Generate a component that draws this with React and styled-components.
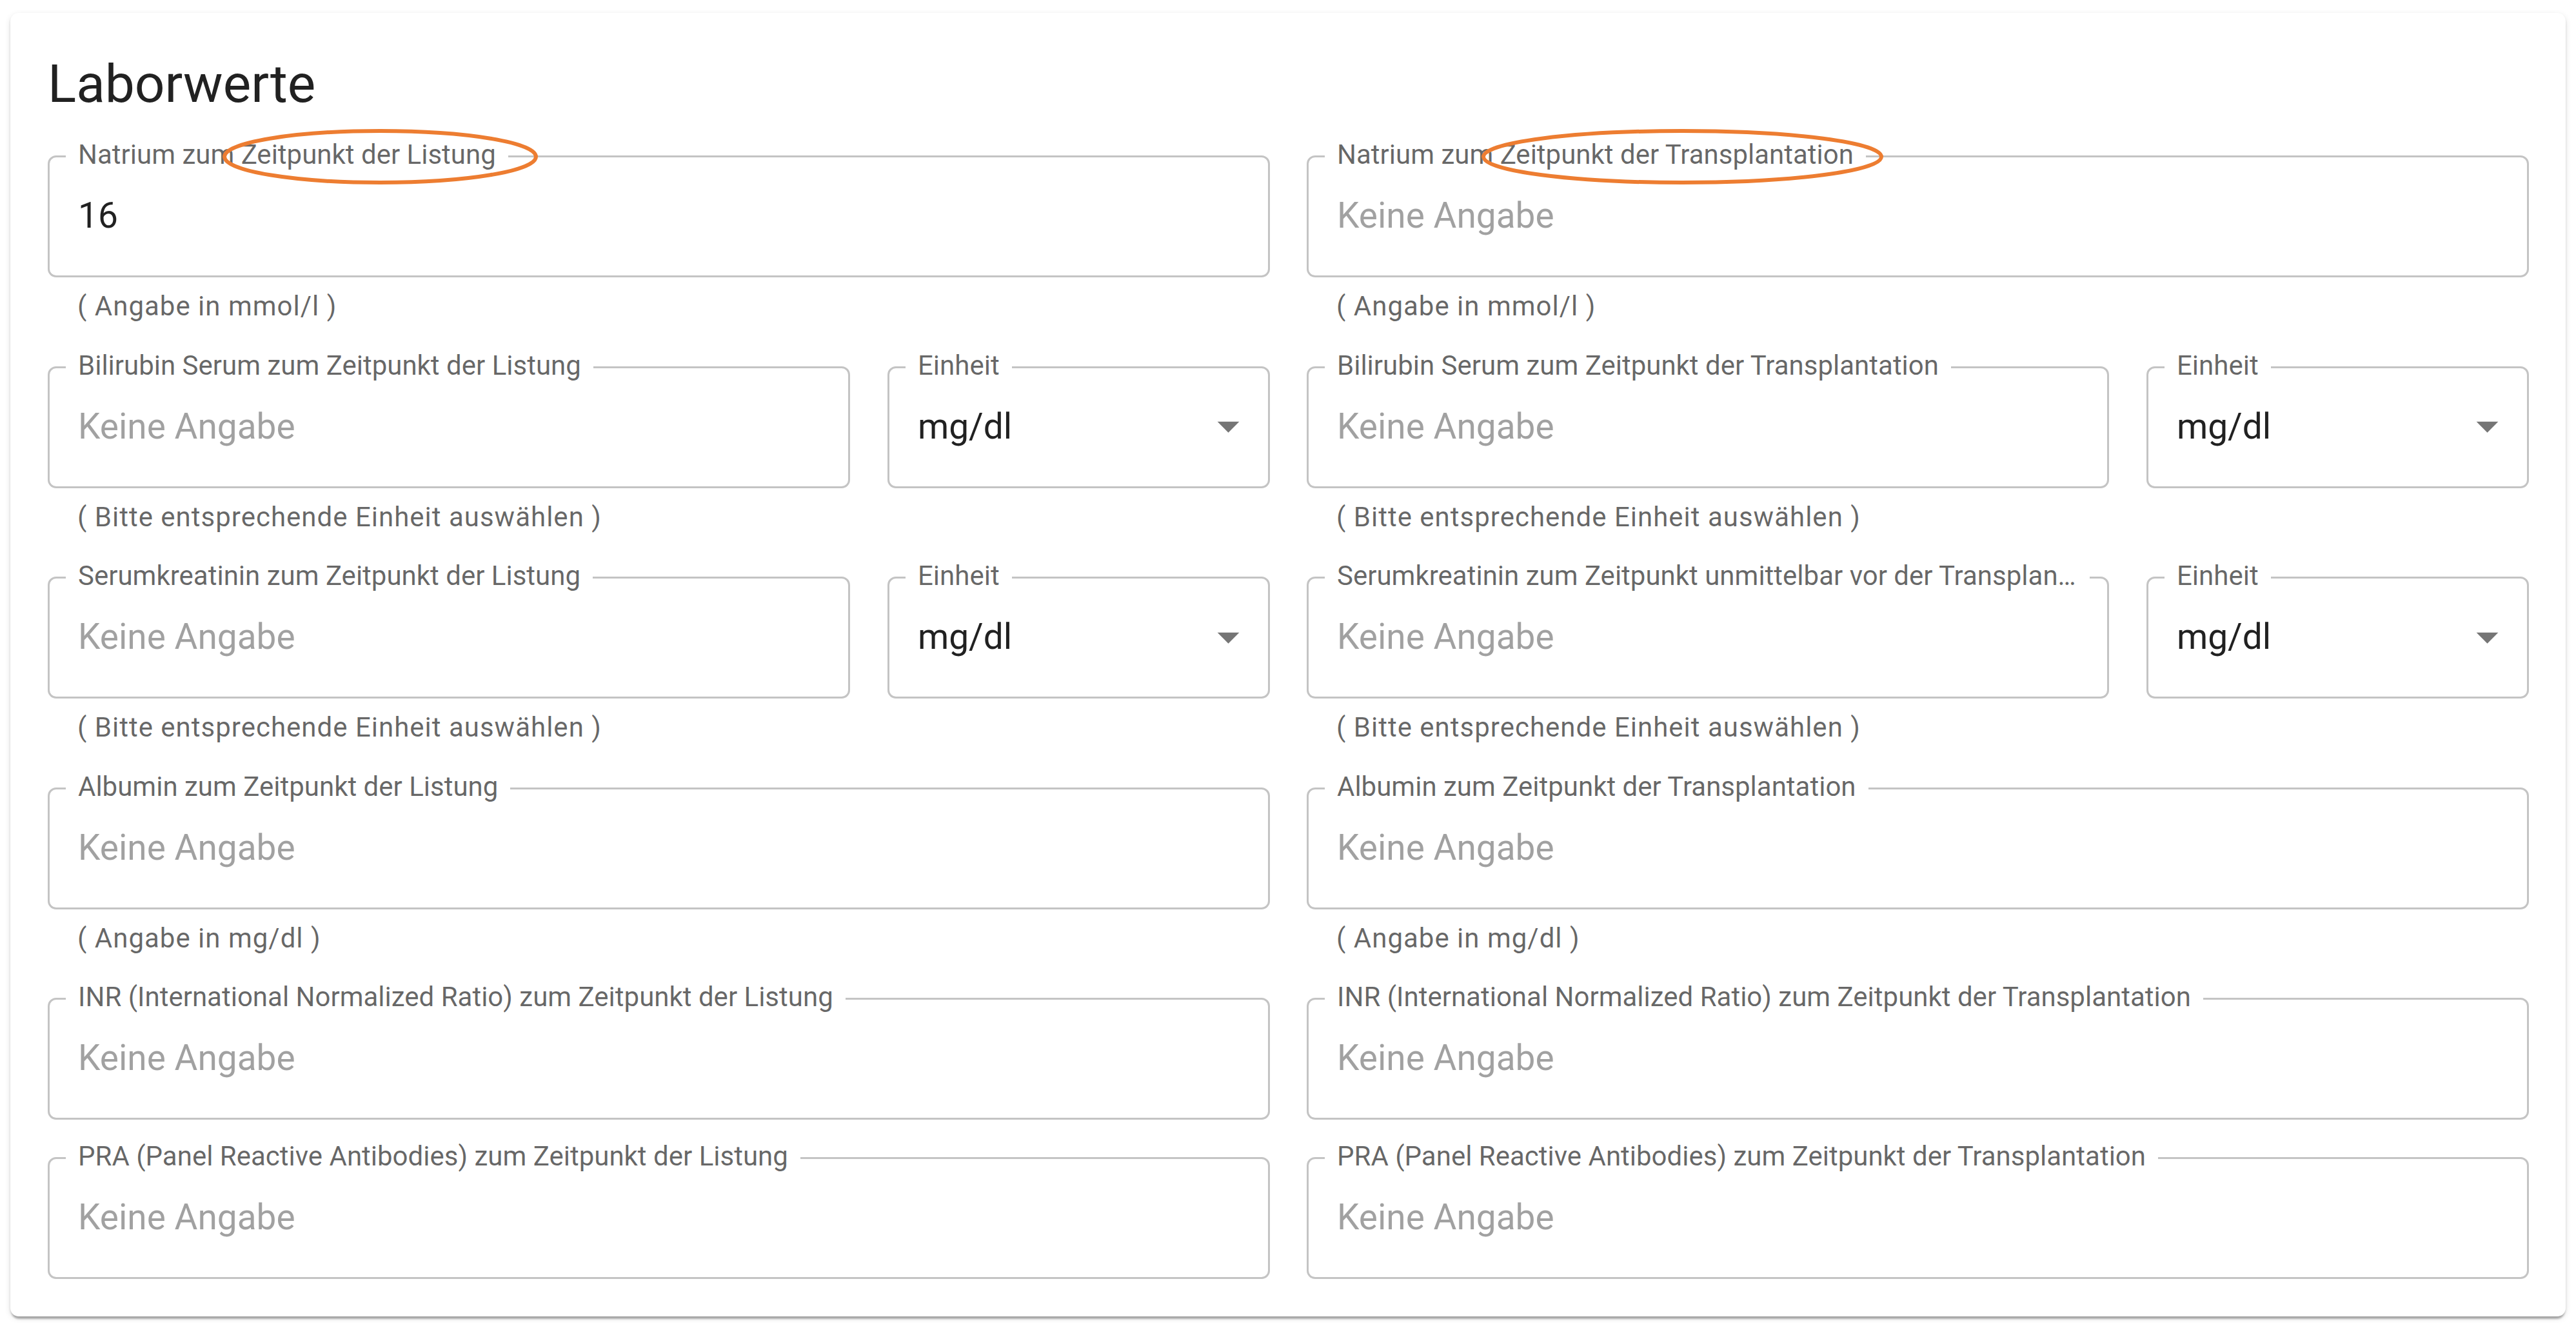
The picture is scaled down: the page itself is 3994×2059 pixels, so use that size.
import React from 'react';
import styled, { createGlobalStyle } from 'styled-components';

const GlobalStyle = createGlobalStyle`
  html, body {
    margin: 0;
    padding: 0;
    background: #fff;
  }
  body {
    font-family: Roboto, 'Noto Sans', sans-serif;
  }
  * {
    box-sizing: border-box;
  }
`;

const fields = [
  {
    label: 'Natrium zum Zeitpunkt der Listung',
    value: '16',
    helper: '( Angabe in mmol/l )',
    mark: 489,
  },
  {
    label: 'Natrium zum Zeitpunkt der Transplantation',
    helper: '( Angabe in mmol/l )',
    mark: 623,
  },
  {
    label: 'Bilirubin Serum zum Zeitpunkt der Listung',
    unit: 'mg/dl',
    helper: '( Bitte entsprechende Einheit auswählen )',
  },
  {
    label: 'Bilirubin Serum zum Zeitpunkt der Transplantation',
    unit: 'mg/dl',
    helper: '( Bitte entsprechende Einheit auswählen )',
  },
  {
    label: 'Serumkreatinin zum Zeitpunkt der Listung',
    unit: 'mg/dl',
    helper: '( Bitte entsprechende Einheit auswählen )',
  },
  {
    label: 'Serumkreatinin zum Zeitpunkt unmittelbar vor der Transplantation',
    unit: 'mg/dl',
    helper: '( Bitte entsprechende Einheit auswählen )',
  },
  {
    label: 'Albumin zum Zeitpunkt der Listung',
    helper: '( Angabe in mg/dl )',
  },
  {
    label: 'Albumin zum Zeitpunkt der Transplantation',
    helper: '( Angabe in mg/dl )',
  },
  { label: 'INR (International Normalized Ratio) zum Zeitpunkt der Listung' },
  { label: 'INR (International Normalized Ratio) zum Zeitpunkt der Transplantation' },
  { label: 'PRA (Panel Reactive Antibodies) zum Zeitpunkt der Listung' },
  { label: 'PRA (Panel Reactive Antibodies) zum Zeitpunkt der Transplantation' },
];

// orange hand-drawn style circle around part of a label
const Mark = ({ width }) => (
  <Marker width={width} height={86} viewBox={`0 0 ${width} 86`}>
    <ellipse
      cx={width / 2}
      cy={43}
      rx={width / 2 - 3}
      ry={40}
      fill="none"
      stroke="#ED7D31"
      strokeWidth="6"
    />
  </Marker>
);

const ArrowDown = () => (
  <svg width="81" height="81" viewBox="0 0 24 24">
    <path d="M7 10l5 5 5-5z" fill="rgba(0,0,0,0.54)" />
  </svg>
);

const TextBox = ({ label, value, mark }) => (
  <Box>
    <Label>{label}</Label>
    <Input defaultValue={value} placeholder="Keine Angabe" readOnly />
    {mark && <Mark width={mark} />}
  </Box>
);

const UnitSelect = ({ unit }) => (
  <Box>
    <Label>Einheit</Label>
    <SelectValue>{unit}</SelectValue>
    <ArrowDown />
  </Box>
);

const App = () => {
  return (
    <Page>
      <GlobalStyle />
      <Card>
        <Title>Laborwerte</Title>
        <FormGrid>
          {fields.map((field) => (
            <Cell key={field.label}>
              {field.unit ? (
                <Pair>
                  <TextBox label={field.label} />
                  <UnitSelect unit={field.unit} />
                </Pair>
              ) : (
                <TextBox label={field.label} value={field.value} mark={field.mark} />
              )}
              {field.helper && <Helper>{field.helper}</Helper>}
            </Cell>
          ))}
        </FormGrid>
      </Card>
    </Page>
  );
};

const Page = styled.div`
  padding: 20px 16px 17px;
`;

const Card = styled.section`
  background: #fff;
  border-radius: 13px;
  box-shadow: 0 7px 3px -3px rgba(0, 0, 0, 0.2), 0 3px 3px 0 rgba(0, 0, 0, 0.14),
    0 3px 10px 0 rgba(0, 0, 0, 0.12);
  padding: 56px 57px 58px 58px;
`;

const Title = styled.h2`
  margin: 0 0 57px;
  font-size: 82px;
  line-height: 108px;
  font-weight: 400;
  color: rgba(0, 0, 0, 0.87);
`;

const FormGrid = styled.div`
  display: grid;
  grid-template-columns: 1fr 1fr;
  column-gap: 57px;
  row-gap: 58px;
`;

const Cell = styled.div`
  display: flex;
  flex-direction: column;
  min-width: 0;
`;

const Pair = styled.div`
  display: grid;
  grid-template-columns: 1244fr 593fr;
  column-gap: 58px;
`;

const Box = styled.div`
  position: relative;
  height: 189px;
  min-width: 0;
  border: 3px solid #c4c4c4;
  border-radius: 13px;
  display: flex;
  align-items: center;
  justify-content: space-between;
  padding: 0 21px 3px 44px;
`;

const Label = styled.span`
  position: absolute;
  left: 25px;
  top: -29px;
  max-width: calc(100% - 52px);
  padding: 0 19px;
  background: #fff;
  font-size: 42px;
  line-height: 50px;
  color: rgba(0, 0, 0, 0.6);
  white-space: nowrap;
  overflow: hidden;
  text-overflow: ellipsis;
`;

const Input = styled.input`
  flex: 1;
  min-width: 0;
  height: 78px;
  border: 0;
  outline: 0;
  padding: 0;
  margin: 0;
  background: transparent;
  font-family: Roboto, sans-serif;
  font-size: 55px;
  line-height: 78px;
  color: rgba(0, 0, 0, 0.87);

  &::placeholder {
    color: rgba(0, 0, 0, 0.87);
    opacity: 0.42;
  }
`;

const SelectValue = styled.span`
  font-size: 55px;
  line-height: 78px;
  color: rgba(0, 0, 0, 0.87);
`;

const Helper = styled.p`
  margin: 10px 0 0;
  padding-left: 46px;
  font-size: 42px;
  line-height: 69.5px;
  letter-spacing: 1px;
  color: rgba(0, 0, 0, 0.6);
`;

const Marker = styled.svg`
  position: absolute;
  left: 268px;
  top: -44px;
  pointer-events: none;
  overflow: visible;
`;

export default App;
